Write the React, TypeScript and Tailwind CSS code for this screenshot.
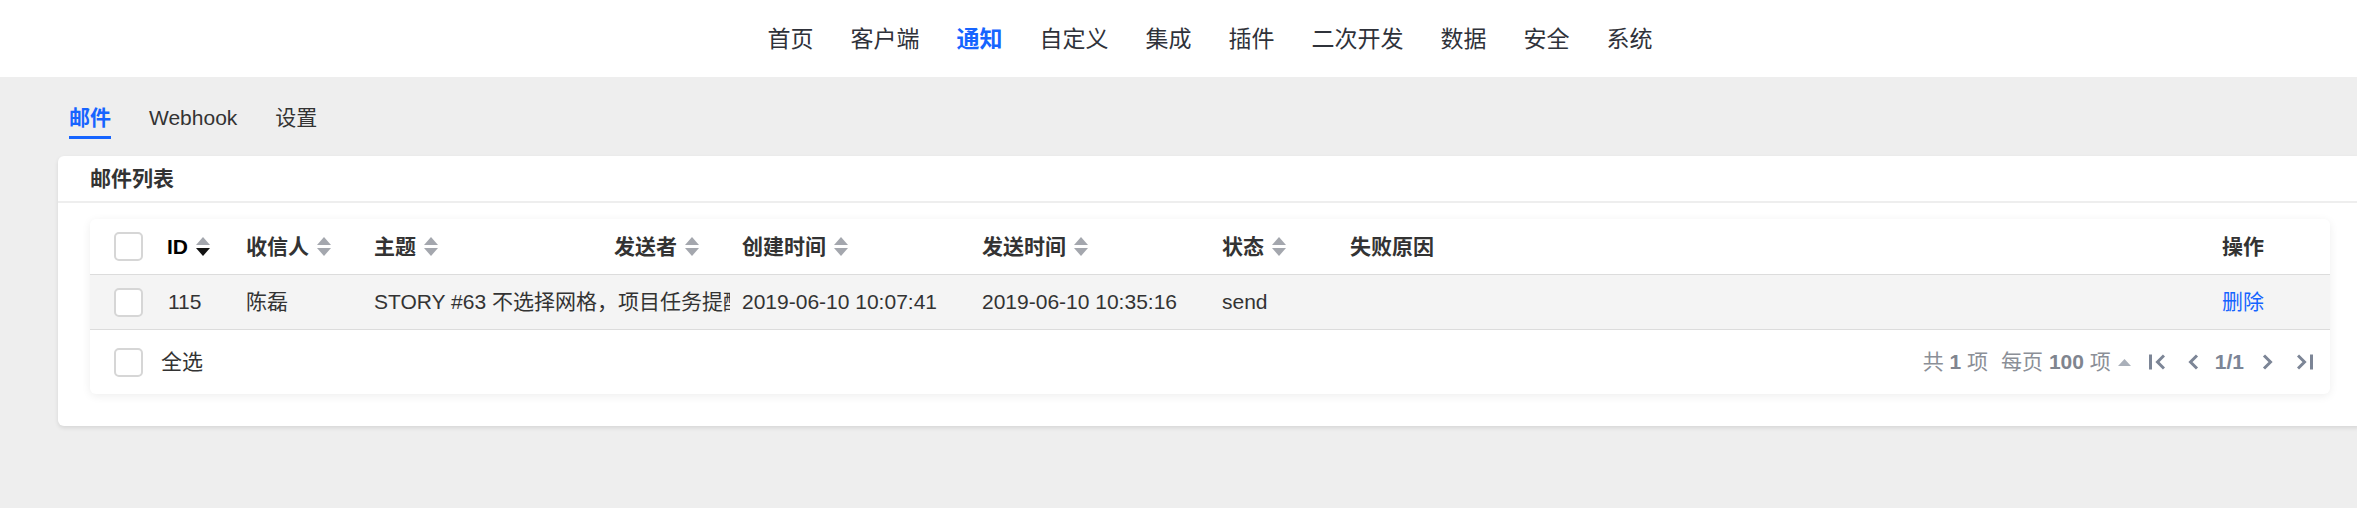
import React from "react";

const navItems = ["首页", "客户端", "通知", "自定义", "集成", "插件", "二次开发", "数据", "安全", "系统"];

function Sort({ active }: { active?: boolean }) {
  return (
    <svg width="14" height="19" viewBox="0 0 14 19" className="ml-[8px] shrink-0">
      <polygon points="7,0 14,8 0,8" fill="#a4a7ae" />
      <polygon points="0,11 14,11 7,19" fill={active ? "#111111" : "#a4a7ae"} />
    </svg>
  );
}

function Checkbox() {
  return <div className="w-[29px] h-[29px] border-2 border-[#d6d6d6] rounded-[5px] bg-white shrink-0" />;
}

function Chevron({ dir }: { dir: "l" | "r" }) {
  return (
    <svg width="11" height="16" viewBox="0 0 11 16" className="shrink-0">
      <path
        d={dir === "l" ? "M9 1.5 L2.5 8 L9 14.5" : "M2 1.5 L8.5 8 L2 14.5"}
        fill="none"
        stroke="#7c8596"
        strokeWidth="3"
      />
    </svg>
  );
}

function Edge({ dir }: { dir: "first" | "last" }) {
  return (
    <svg width="16" height="16" viewBox="0 0 16 16" className="shrink-0">
      {dir === "first" ? (
        <>
          <rect x="0" y="0.5" width="3" height="15" fill="#7c8596" />
          <path d="M15 1.5 L8.5 8 L15 14.5" fill="none" stroke="#7c8596" strokeWidth="3" />
        </>
      ) : (
        <>
          <path d="M1 1.5 L7.5 8 L1 14.5" fill="none" stroke="#7c8596" strokeWidth="3" />
          <rect x="13" y="0.5" width="3" height="15" fill="#7c8596" />
        </>
      )}
    </svg>
  );
}

const rowGrid =
  "grid grid-cols-[77px_79px_128px_240px_128px_240px_240px_128px_872px_108px] items-center";

export default function App() {
  return (
    <div className="w-[2357px] h-[508px] overflow-hidden bg-[#eeeeee] text-[#333333] font-['Liberation_Sans','Noto_Sans_CJK_SC',sans-serif]">
      <header className="h-[77px] bg-white flex items-center justify-center pl-[63px]">
        <nav className="flex items-center gap-[37px] text-[23px] leading-[30px] text-[#2f323a]">
          {navItems.map((n) =>
            n === "通知" ? (
              <span key={n} className="text-[#1664ff] font-bold">
                {n}
              </span>
            ) : (
              <span key={n}>{n}</span>
            )
          )}
        </nav>
      </header>

      <div className="flex items-start gap-[38px] pl-[69px] mt-[27px] text-[21px] leading-[28px]">
        <div className="pb-[4px] border-b-[3px] border-[#1664ff] text-[#1664ff] font-bold">邮件</div>
        <div className="pb-[4px] border-b-[3px] border-transparent">Webhook</div>
        <div className="pb-[4px] border-b-[3px] border-transparent">设置</div>
      </div>

      <div className="mt-[17px] ml-[58px] w-[2304px] bg-white rounded-[6px] shadow-[0_2px_4px_rgba(0,0,0,0.10)]">
        <div className="h-[45px] flex items-center pl-[32px] text-[21px] font-bold leading-[28px]">邮件列表</div>
        <div className="h-[2px] bg-[#eeeeee]" />
        <div className="pt-[16px] px-[32px] pb-[32px]">
          <div className="w-[2240px] bg-white rounded-[6px] shadow-[0_2px_10px_rgba(0,0,0,0.07)] text-[21px] leading-[28px]">
            <div className={`${rowGrid} h-[56px] border-b border-[#dcdcdc] font-bold`}>
              <div className="pl-[24px]">
                <Checkbox />
              </div>
              <div className="flex items-center text-black">
                ID
                <Sort active />
              </div>
              <div className="flex items-center">
                收信人
                <Sort />
              </div>
              <div className="flex items-center">
                主题
                <Sort />
              </div>
              <div className="flex items-center">
                发送者
                <Sort />
              </div>
              <div className="flex items-center">
                创建时间
                <Sort />
              </div>
              <div className="flex items-center">
                发送时间
                <Sort />
              </div>
              <div className="flex items-center">
                状态
                <Sort />
              </div>
              <div>失败原因</div>
              <div>操作</div>
            </div>

            <div className={`${rowGrid} h-[55px] border-b border-[#dcdcdc] bg-[#f4f4f4]`}>
              <div className="pl-[24px]">
                <Checkbox />
              </div>
              <div className="pl-[1px]">115</div>
              <div>陈磊</div>
              <div className="col-span-2">
                <div className="w-[356px] overflow-hidden whitespace-nowrap">STORY #63 不选择网格，项目任务提醒</div>
              </div>
              <div>2019-06-10 10:07:41</div>
              <div>2019-06-10 10:35:16</div>
              <div>send</div>
              <div />
              <div className="text-[#1664ff]">删除</div>
            </div>

            <div className="h-[64px] flex items-center pl-[24px]">
              <Checkbox />
              <span className="ml-[18px]">全选</span>
              <div className="ml-auto mr-[17px] flex items-center text-[#8b8f97]">
                <span>
                  共 <b className="text-[#80858f]">1</b> 项
                </span>
                <span className="ml-[13px]">
                  每页 <b className="text-[#80858f]">100</b> 项
                </span>
                <svg width="13" height="7" viewBox="0 0 13 7" className="ml-[7px] shrink-0">
                  <polygon points="6.5,0 13,7 0,7" fill="#aab0ba" />
                </svg>
                <span className="ml-[18px] flex items-center">
                  <Edge dir="first" />
                </span>
                <span className="ml-[23px] flex items-center">
                  <Chevron dir="l" />
                </span>
                <b className="ml-[16px] text-[#7c8596]">1/1</b>
                <span className="ml-[18px] flex items-center">
                  <Chevron dir="r" />
                </span>
                <span className="ml-[24px] flex items-center">
                  <Edge dir="last" />
                </span>
              </div>
            </div>
          </div>
        </div>
      </div>
    </div>
  );
}
